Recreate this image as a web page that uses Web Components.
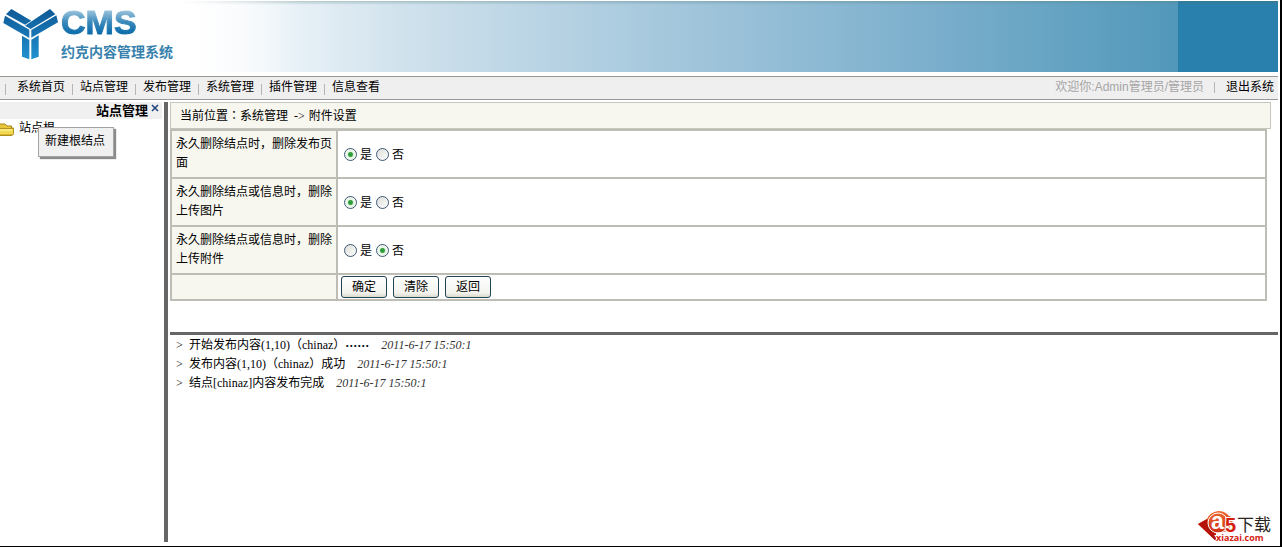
<!DOCTYPE html>
<html lang="zh-CN">
<head>
<meta charset="utf-8">
<title>约克内容管理系统</title>
<style>
  body {
    margin: 0;
    background: #fff;
    color: #000;
    font: 12px/19px "Liberation Serif", "Noto Sans CJK SC", serif;
  }
</style>
</head>
<body>
<cms-app></cms-app>

<script>
class CmsLogo extends HTMLElement {

    constructor() {
        super();
        this.attachShadow({mode: "open"});
    }

    connectedCallback() {
        this.shadowRoot.innerHTML = `
        <style>
        :host {
            display: flex;
            align-items: flex-start;
            gap: 3px;
            padding: 7px 0 0 3px;
        }

        svg {
            display: block;
            width: 55px;
            height: 53px;
        }

        .name {
            width: max-content;
            font: bold 34px/36px "Liberation Sans", sans-serif;
            color: transparent;
            background: linear-gradient(#a8cbe0 14%, #3b8abb 50%, #0e6eac 80%);
            -webkit-background-clip: text;
            background-clip: text;
            -webkit-text-stroke: 1px transparent;
            margin-top: -3px;
        }

        .sub {
            font: bold 14px/18px "Noto Sans CJK SC", sans-serif;
            color: #3781ad;
            margin-top: 2px;
        }
        </style>
        <svg viewBox="0 0 165 159" aria-hidden="true">
            <defs>
                <linearGradient id="g" x1="0" y1="0" x2="0" y2="159" gradientUnits="userSpaceOnUse">
                    <stop offset="0" stop-color="#0d5794"/>
                    <stop offset="1" stop-color="#2191d0"/>
                </linearGradient>
            </defs>
            <g fill="url(#g)">
                <path d="M25 6 85 41 66 53 9 22Z"/>
                <path d="M6 26 79 68 79 93 1 48Z"/>
                <path d="M141 6 157 22 83 66 66 56Z"/>
                <path d="M160 25 165 46 85 92 85 69Z"/>
                <path d="M57 86 79 99 79 157 57 149Z"/>
                <path d="M85 98 107 85 107 149 85 157Z"/>
            </g>
        </svg>
        <div>
            <div class="name">CMS</div>
            <div class="sub">约克内容管理系统</div>
        </div>`;
    }
}

class CmsBanner extends HTMLElement {

    constructor() {
        super();
        this.attachShadow({mode: "open"});
    }

    connectedCallback() {
        this.shadowRoot.innerHTML = `
        <style>
        :host {
            display: flex;
            justify-content: space-between;
            height: 71px;
            margin: 1px 0 4px;
            background: linear-gradient(rgba(90, 130, 130, .35), rgba(90, 130, 130, 0) 4px),
                linear-gradient(90deg, #fff 14%, #f3f8fc 19%, #cfe1ec 32%, #a9cade 50%, #7fb1ce 71%, #5298ba 92%);
        }

        .left {
            background: linear-gradient(90deg, #fff 180px, transparent 300px);
            width: 400px;
            margin-top: -1px;
        }

        .block {
            width: 100px;
            background: linear-gradient(#357b93, #2a80ad 4px);
        }
        </style>
        <div class="left"><slot></slot></div>
        <div class="block"></div>`;
    }
}

class CmsNav extends HTMLElement {

    constructor() {
        super();
        this.attachShadow({mode: "open"});
    }

    connectedCallback() {
        const items = ["系统首页", "站点管理", "发布管理", "系统管理", "插件管理", "信息查看"];
        this.shadowRoot.innerHTML = `
        <style>
        :host {
            display: block;
            background: #f0eff0;
            border-top: 1px solid #999790;
            border-bottom: 1px solid #999;
            font-family: "Liberation Sans", "Noto Sans CJK SC", sans-serif;
        }

        nav {
            display: flex;
            justify-content: space-between;
            height: 22px;
            line-height: 21px;
            padding: 0 4px 0 5px;
        }

        ul {
            display: flex;
            list-style: none;
            margin: 0;
            padding: 0;
        }

        li {
            display: flex;
            padding-right: 7px;
        }

        li::before, .user::after {
            content: "";
            width: 1px;
            height: 11px;
            margin: 7px 7px 0 0;
            background: #b5b5b5;
        }

        li:first-child::before {
            margin-right: 11px;
        }

        a {
            color: #000;
            text-decoration: none;
        }

        .right, .user {
            display: flex;
        }

        .user {
            color: #a5a5a5;
        }

        .user::after {
            margin: 5px 11px 0 10px;
        }
        </style>
        <nav>
            <ul>${items.map(t => `<li><a href="#">${t}</a></li>`).join("")}</ul>
            <div class="right">
                <span class="user">欢迎你:Admin管理员/管理员</span>
                <a href="#">退出系统</a>
            </div>
        </nav>`;
    }
}

class SiteTree extends HTMLElement {

    constructor() {
        super();
        this.attachShadow({mode: "open"});
    }

    connectedCallback() {
        this.shadowRoot.innerHTML = `
        <style>
        :host {
            display: block;
            width: 162px;
            flex: none;
            position: relative;
        }

        header {
            display: flex;
            justify-content: flex-end;
            gap: 3px;
            height: 17px;
            padding-right: 3px;
            background: #f0f0f1;
        }

        h2 {
            margin: 0;
            font-size: 13px;
            line-height: 17px;
        }

        header button {
            width: 8px;
            height: 12px;
            padding: 0;
            border: 0;
            background: none;
        }

        svg {
            display: block;
        }

        .node {
            display: flex;
            align-items: center;
            gap: 5px;
            color: #000;
            text-decoration: none;
        }

        .menu {
            position: absolute;
            left: 38px;
            top: 25px;
            padding: 4px 8px 5px 6px;
            border: 1px solid #a3a3a3;
            background: #f0f0f0;
            box-shadow: 2px 2px 1px #8c8c8c;
            font: inherit;
            line-height: 19px;
            color: #000;
        }
        </style>
        <header>
            <h2>站点管理</h2>
            <button aria-label="关闭"><svg width="8" height="12" viewBox="0 0 8 12"><path d="M1 3 7 9M7 3 1 9" stroke="#23467f" stroke-width="1.6"/></svg></button>
        </header>
        <a class="node" href="#">
            <svg width="14" height="14" viewBox="0 0 14 14">
                <path d="M-3 3 0 2H5L7 4H11.500V6H13.500V12L12 13.500H-3Z" fill="#e8c53a" stroke="#a58513"/>
                <path d="M-3 6.500H13.500V11.500L12 13H-3Z" fill="#f3d94f" stroke="#b4941c"/>
                <path d="M-2 8H12" stroke="#fff6b0"/>
            </svg>
            站点根
        </a>
        <button class="menu">新建根结点</button>`;
    }
}

class CrumbBar extends HTMLElement {

    constructor() {
        super();
        this.attachShadow({mode: "open"});
    }

    connectedCallback() {
        this.shadowRoot.innerHTML = `
        <style>
        :host {
            display: block;
            margin-right: 7px;
            padding: 4px 9px 2px;
            border: 1px solid #c6c6bc;
            background: #f7f7ef;
            font-family: "Liberation Serif", "Noto Sans CJK TC", serif;
        }

        .arrow {
            margin: 0 4px 0 6px;
        }
        </style>
        <slot name="group"></slot><span class="arrow">-&gt;</span><slot></slot>`;
    }
}

class SettingsForm extends HTMLElement {

    constructor() {
        super();
        this.attachShadow({mode: "open"});
    }

    row(text, name, yes) {
        return `
            <tr>
                <th scope="row" id="${name}">${text}</th>
                <td><div class="radios" role="radiogroup" aria-labelledby="${name}">
                    <label><input type="radio" name="${name}" value="1" ${yes ? "checked" : ""}>是</label>
                    <label><input type="radio" name="${name}" value="0" ${yes ? "" : "checked"}>否</label>
                </div></td>
            </tr>`;
    }

    connectedCallback() {
        this.shadowRoot.innerHTML = `
        <style>
        :host {
            display: block;
            margin-right: 11px;
        }

        form {
            margin: 0;
        }

        table {
            width: 100%;
            border-collapse: collapse;
            table-layout: fixed;
        }

        th, td {
            border: 2px solid #bdbdb5;
            padding: 4px;
        }

        th {
            width: 156px;
            background: #f7f7ef;
            font-weight: normal;
            text-align: left;
        }

        .radios {
            display: flex;
            gap: 4px;
            padding: 3px 2px 0;
        }

        label {
            display: flex;
            align-items: center;
            gap: 3px;
        }

        input {
            appearance: none;
            width: 13px;
            height: 13px;
            margin: 0 0 3px;
            border: 1px solid #3d5a78;
            border-radius: 50%;
            background: linear-gradient(135deg, #dcdcd7, #fff);
        }

        input:checked {
            background: radial-gradient(circle, #2f9e3a 2px, #e6f3e4 3px, #fff);
        }

        .actions {
            padding: 1px 3px;
        }

        .buttons {
            display: flex;
            gap: 6px;
        }

        button {
            width: 46px;
            height: 22px;
            padding: 1px 0 0;
            border: 1px solid #1f4457;
            border-radius: 3px;
            background: linear-gradient(#fff, #f2f2ed 80%, #dcdace);
            font: inherit;
            line-height: 19px;
            color: #000;
        }
        </style>
        <form>
        <table>
            ${this.row("永久删除结点时，删除发布页面", "page", true)}
            ${this.row("永久删除结点或信息时，删除上传图片", "image", true)}
            ${this.row("永久删除结点或信息时，删除上传附件", "file", false)}
            <tr>
                <th></th>
                <td class="actions"><div class="buttons">
                    <button type="button">确定</button>
                    <button type="reset">清除</button>
                    <button type="button">返回</button>
                </div></td>
            </tr>
        </table>
        </form>`;
    }
}

class LogLine extends HTMLElement {

    constructor() {
        super();
        this.attachShadow({mode: "open"});
    }

    connectedCallback() {
        this.shadowRoot.innerHTML = `
        <style>
        :host {
            display: flex;
            padding-left: 6px;
            white-space: pre;
        }

        .mark {
            width: 13px;
        }

        time {
            margin-left: 12px;
            font-style: italic;
            color: #333;
        }
        </style>
        <span class="mark">&gt;</span><slot></slot><time>${this.getAttribute("time")}</time>`;
    }
}

class SiteBadge extends HTMLElement {

    constructor() {
        super();
        this.attachShadow({mode: "open"});
    }

    connectedCallback() {
        this.shadowRoot.innerHTML = `
        <style>
        :host {
            display: block;
            position: absolute;
            right: 6px;
            bottom: 1px;
        }

        svg {
            display: block;
        }
        </style>
        <svg width="76" height="34" viewBox="0 0 76 34">
            <defs>
                <linearGradient id="r" x1="0" y1="0" x2="0" y2="1">
                    <stop offset="0" stop-color="#f0692f"/>
                    <stop offset="1" stop-color="#c01a0a"/>
                </linearGradient>
            </defs>
            <path d="M0 13 9 8Q12 1 20 0Q27 0 31 5L36 7 30 20 18 22 18 30Z" fill="url(#r)"/>
            <path d="M0 13 18 30 16 21Q10 17 9 8Z" fill="#b5140a"/>
            <circle cx="20" cy="12" r="10" fill="none" stroke="#fff" stroke-width="1"/>
            <text x="13" y="18" font-family="Liberation Sans" font-weight="bold" font-size="23" fill="#fff">a</text>
            <text x="27" y="21" font-family="Liberation Sans" font-weight="bold" font-size="20" fill="#d5200f" stroke="#fff" stroke-width="2" paint-order="stroke">5</text>
            <text x="39" y="20" font-family="Noto Sans CJK SC" font-size="17" fill="#2b2320">下载</text>
            <text x="18" y="30" font-family="Open Sans" font-weight="bold" font-size="9" fill="#d5200f" stroke="#fff" stroke-width="2" paint-order="stroke">xiazai.com</text>
        </svg>`;
    }
}

class CmsApp extends HTMLElement {

    constructor() {
        super();
        this.attachShadow({mode: "open"});
    }

    connectedCallback() {
        this.shadowRoot.innerHTML = `
        <style>
        :host {
            display: flex;
            flex-direction: column;
            box-sizing: border-box;
            position: relative;
            min-height: 100vh;
            margin-right: 2px;
            padding-right: 2px;
            border-right: 2px solid #000;
            border-bottom: 1px solid #000;
        }

        main {
            display: flex;
            flex: 1;
            gap: 2px;
            padding: 2px 0 4px;
        }

        .split {
            flex: none;
            width: 4px;
            background: #666;
        }

        .content {
            flex: 1;
            min-width: 0;
        }

        .log {
            margin-top: 31px;
            padding-top: 1px;
            border-top: 3px solid #666;
        }

        .dots {
            font-family: "Noto Sans CJK TC", sans-serif;
            font-weight: bold;
        }
        </style>
        <cms-banner><cms-logo></cms-logo></cms-banner>
        <cms-nav></cms-nav>
        <main>
            <site-tree></site-tree>
            <div class="split"></div>
            <div class="content">
                <crumb-bar><span slot="group" lang="zh-TW">当前位置：系统管理</span>附件设置</crumb-bar>
                <settings-form></settings-form>
                <div class="log">
                    <log-line time="2011-6-17 15:50:1">开始发布内容(1,10)（chinaz）<span class="dots" lang="zh-TW">……</span></log-line>
                    <log-line time="2011-6-17 15:50:1">发布内容(1,10)（chinaz）成功</log-line>
                    <log-line time="2011-6-17 15:50:1">结点[chinaz]内容发布完成</log-line>
                </div>
            </div>
        </main>
        <site-badge></site-badge>`;
    }
}

customElements.define("cms-logo", CmsLogo);
customElements.define("cms-banner", CmsBanner);
customElements.define("cms-nav", CmsNav);
customElements.define("site-tree", SiteTree);
customElements.define("crumb-bar", CrumbBar);
customElements.define("settings-form", SettingsForm);
customElements.define("log-line", LogLine);
customElements.define("site-badge", SiteBadge);
customElements.define("cms-app", CmsApp);
</script>
</body>
</html>
